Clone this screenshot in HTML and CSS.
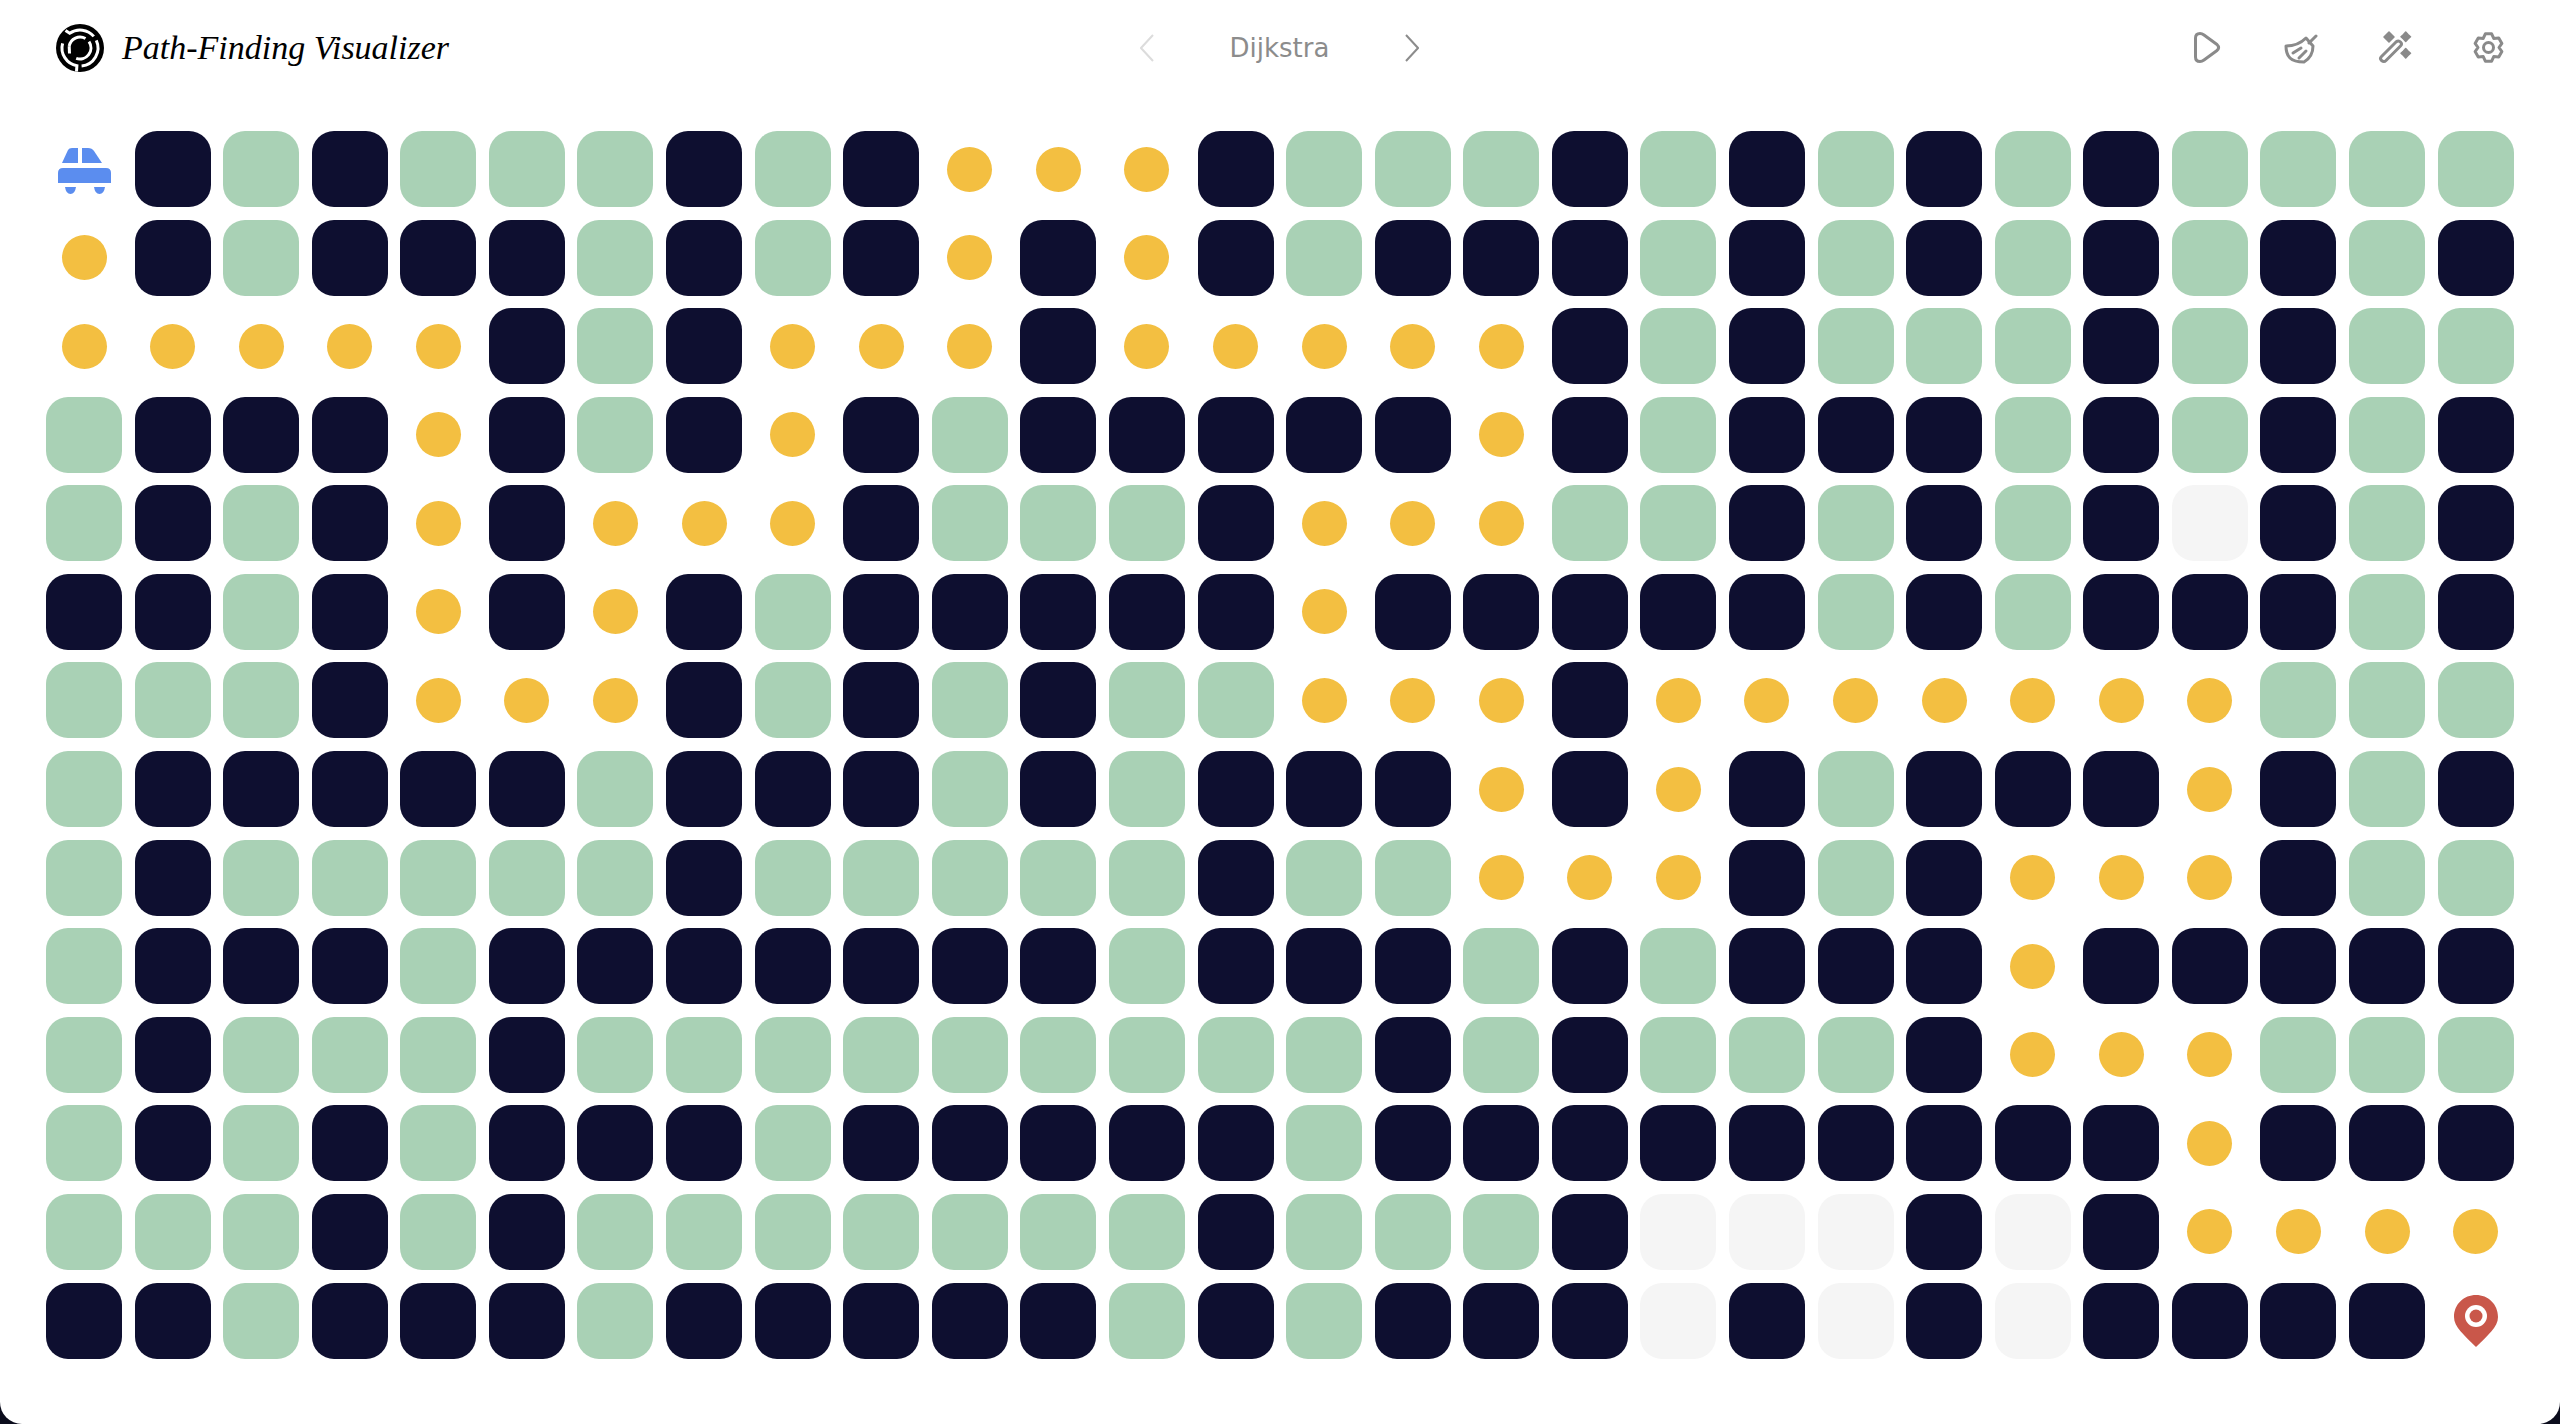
FILE: index.html
```html
<!DOCTYPE html>
<html lang="en">
<head>
    <meta charset="UTF-8">
    <title>Path-Finding Visualizer</title>
    <link rel="stylesheet" href="styles.css">
</head>
<body>
    <div class="app">
        <header class="topbar">
            <div class="brand">
                <svg class="logo" viewBox="0 0 48 48">
                    <circle cx="24" cy="24" r="24" fill="#000"/>
                    <g fill="none" stroke="#fff" stroke-width="3">
                        <path d="M9.500 6.500 L13.700 9.300 A18 18 0 0 1 37.800 12.400"/>
                        <path d="M40.300 16.400 A18 18 0 0 1 25.600 41.900"/>
                        <path d="M20.500 47.500 L20.900 41.700 A18 18 0 0 1 6.600 19.300"/>
                        <path d="M13.200 22.100 A11 11 0 0 1 29.500 14.500"/>
                        <path d="M33 17.700 A11 11 0 0 1 20.200 34.300"/>
                        <path d="M13.200 22.100 L13.500 29.500"/>
                    </g>
                </svg>
                <span class="brand-name">Path-Finding Visualizer</span>
            </div>
            <div class="algo">
                <svg class="chevron off" viewBox="0 0 14 28"><path d="M13 1 L1 14 L13 27"/></svg>
                <span class="algo-name">Dijkstra</span>
                <svg class="chevron" viewBox="0 0 14 28"><path d="M1 1 L13 14 L1 27"/></svg>
            </div>
            <div class="tools">
                <svg class="tool" viewBox="0 0 34 34"><path d="M5.500 7 Q5.500 2.500 10 2.500 Q12 2.500 14 4 L27 13.500 Q30 16.500 27 19.500 L14 29 Q12 30.500 10 30.500 Q5.500 30.500 5.500 26 Z"/></svg>
                <svg class="tool" viewBox="0 0 34 34"><path d="M25 12 L32 5"/><path d="M2 15 C10 15 17 12 22 7 L29 15 C29 22 25 28 20 31 C14 31 9 30 6 27 C3 24 2 20 2 15 Z"/><path d="M9 22 L17 17 M15 27 L22 20"/></svg>
                <svg class="tool" viewBox="0 0 34 34"><path d="M3.500 25.500 L18 11 Q20.500 9 22.500 11 Q24.500 13 22.500 15 L8 29.500 Q6 31.500 3.500 29.500 Q1.500 27.500 3.500 25.500 Z"/><path class="spark" d="M11 1 L13.500 3.500 L16 6 L13.500 8.500 L11 11 L8.500 8.500 L6 6 L8.500 3.500 Z"/><path class="spark" d="M27.700 1 L30 3.500 L32.500 5.700 L30 8 L27.700 10.500 L25.500 8 L23 5.700 L25.500 3.500 Z"/><path class="spark" d="M27.700 17.500 L30 20 L32.500 22.300 L30 24.500 L27.700 27 L25.500 24.500 L23 22.300 L25.500 20 Z"/></svg>
                <svg class="tool" viewBox="0 0 34 34"><path d="M13.350 2.860 L19.650 2.860 L21.750 7.410 L26.740 6.950 L29.890 12.410 L27 16.500 L29.890 20.590 L26.740 26.050 L21.750 25.590 L19.650 30.140 L13.350 30.140 L11.250 25.590 L6.260 26.050 L3.110 20.590 L6 16.500 L3.110 12.410 L6.260 6.950 L11.250 7.410 Z"/><circle cx="16.500" cy="16.500" r="5"/></svg>
            </div>
        </header>
        <main class="grid" id="grid"></main>
    </div>
    <script src="grid.js"></script>
</body>
</html>
```

FILE: styles.css
```css
* {
    box-sizing: border-box;
}
html, body {
    height: 100%;
}
body {
    margin: 0;
    background-color: #0b0c1c;
}
.app {
    height: 100vh;
    background-color: #fff;
    border-radius: 0 0 22px 22px;
    padding: 0 47px 0 46px;
}
.topbar {
    height: 131px;
    padding: 0 7px 35px;
    display: grid;
    grid-template-columns: 1fr auto 1fr;
    align-items: center;
}
.brand {
    display: flex;
    align-items: center;
    gap: 18px;
    padding-left: 3px;
}
.logo {
    width: 48px;
    height: 48px;
}
.brand-name {
    font-family: "Liberation Serif", serif;
    font-style: italic;
    font-size: 34px;
    color: #000;
}
.algo {
    display: flex;
    align-items: center;
    gap: 76px;
}
.algo-name {
    font-family: "DejaVu Sans", sans-serif;
    font-size: 26px;
    color: #8c8c8c;
}
.chevron {
    width: 14px;
    height: 28px;
    fill: none;
    stroke: #8c8c8c;
    stroke-width: 2;
}
.chevron.off {
    stroke: #dcdcdc;
}
.tools {
    display: flex;
    justify-content: flex-end;
    gap: 60px;
}
.tool {
    width: 34px;
    height: 34px;
    fill: none;
    stroke: #8a8a8a;
    stroke-width: 3;
    stroke-linecap: round;
    stroke-linejoin: round;
}
.spark {
    fill: #8a8a8a;
    stroke-width: 1.5;
}
.grid {
    display: grid;
    grid-template-columns: repeat(28, 76px);
    grid-auto-rows: 76px;
    gap: 12.58px;
}
.cell {
    display: flex;
    align-items: center;
    justify-content: center;
    border-radius: 22px;
}
.wall {
    background-color: #0e0f30;
}
.visited {
    background-color: #a9d1b5;
}
.frontier {
    background-color: #f5f5f5;
}
.path::after {
    content: "";
    width: 45px;
    height: 45px;
    border-radius: 50%;
    background-color: #f3bf41;
}
.cell svg {
    width: 56px;
    height: 56px;
}
```

FILE: grid.js
```js
// d wall, g visited, f frontier, y path, S start, E end
var rows = [
    "SdgdgggdgdyyydgggdgdgdgdgggG",
    "ydgdddgdgdydydgdddgdgdgdgdgd",
    "yyyyydgdyyydyyyyydgdgggdgdgg",
    "gdddydgdydgdddddydgdddgdgdgd",
    "gdgdydyyydgggdyyyggdgdgdfdgd",
    "ddgdydydgdddddydddddgdgdddgd",
    "gggdyyydgdgdggyyydyyyyyyyggg",
    "gdddddgdddgdgdddydydgdddydgd",
    "gdgggggdgggggdggyyydgdyyydgg",
    "gdddgdddddddgdddgdgdddyddddd",
    "gdgggdgggggggggdgdgggdyyyggg",
    "gdgdgdddgdddddgdddddddddyddd",
    "gggdgdgggggggdgggdfffdfdyyyy",
    "ddgdddgdddddgdgdddfdfdfddddE"
];

var classes = { d: "wall", g: "visited", G: "visited", f: "frontier", y: "path" };

var car = '<svg viewBox="0 0 56 56"><g fill="#5b8def">' +
    '<path d="M6 22 L12 9 Q13 7 16 7 L22 7 L22 22 Z"/>' +
    '<path d="M26 7 L32 7 Q36 7 38 10 L46 22 L26 22 Z"/>' +
    '<path d="M2 32 Q2 27 7 27 L50 27 Q55 27 55 32 L55 42 L2 42 Z"/>' +
    '<path d="M9 46 L20 46 Q19 53 14.500 53 Q10 53 9 46 Z"/>' +
    '<path d="M38 46 L49 46 Q48 53 43.500 53 Q39 53 38 46 Z"/></g></svg>';

var pin = '<svg viewBox="0 0 56 56"><path fill="#c9574a" d="M28 2 C40 2 50 11 50 24 C50 34 40 42 28 54 C16 42 6 34 6 24 C6 11 16 2 28 2 Z"/>' +
    '<circle cx="28" cy="23" r="11" fill="#fff"/><circle cx="28" cy="23" r="6.500" fill="#c9574a"/></svg>';

var grid = document.getElementById("grid");
rows.forEach(function (row) {
    row.split("").forEach(function (ch) {
        var cell = document.createElement("div");
        cell.className = "cell " + (classes[ch] || "");
        if (ch === "S") cell.innerHTML = car;
        if (ch === "E") cell.innerHTML = pin;
        grid.appendChild(cell);
    });
});
```
